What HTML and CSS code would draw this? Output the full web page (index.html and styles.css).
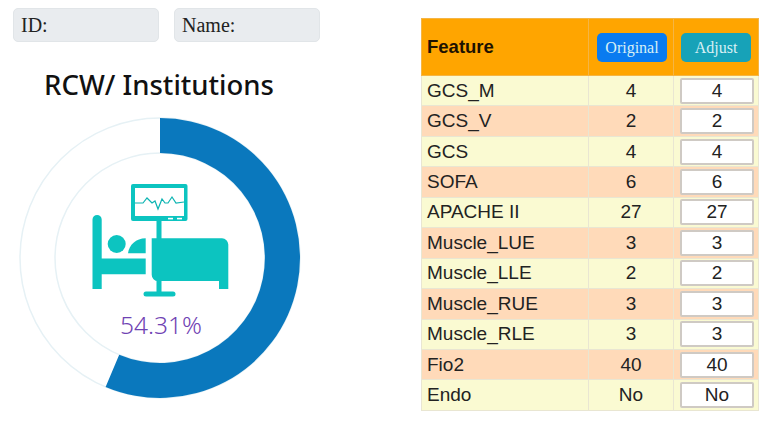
FILE: index.html
```html
<!DOCTYPE html>
<html lang="en">
<head>
  <meta charset="UTF-8" />
  <meta name="viewport" content="width=device-width, initial-scale=1.0"/>
  <title>RCW Institutions</title>
  <link rel="stylesheet" href="styles.css">
</head>
<body>
  <div class="page">
    <div class="left">
      <div class="fields">
        <div class="field">ID:</div>
        <div class="field">Name:</div>
      </div>
      <h2 class="title">RCW/ Institutions</h2>
      <svg class="gauge" width="282" height="282" viewBox="19 117 282 282">
        <circle class="track" cx="160" cy="258" r="140"/>
        <circle class="track" cx="160" cy="258" r="105"/>
        <path class="arc" d="M160 118A140 140 0 1 1 105.6 387L119.2 354.8A105 105 0 1 0 160 153Z"/>

        <!-- monitor -->
        <rect class="icon" x="131" y="184" width="56.500" height="37" rx="2"/>
        <rect class="blank" x="135" y="188" width="49" height="28"/>
        <rect class="blank" x="168" y="217.800" width="5" height="1.600"/>
        <rect class="blank" x="177" y="217.800" width="5" height="1.600"/>
        <polyline class="trace" points="135,203 143,203 147,198 152,203 155,201 158,209 162,199 165,203 168,203 172,197 176,203 184,202"/>
        <rect class="icon" x="156.500" y="220" width="5" height="74"/>
        <rect class="icon" x="143.500" y="291.500" width="32" height="5" rx="2.500"/>

        <!-- bed and patient -->
        <path class="icon" d="M92.500 219.500a4.600 4.600 0 0 1 9.200 0V258.500H145.700V274.300H101.700V289H92.500Z"/>
        <circle class="icon" cx="116.700" cy="244" r="9"/>
        <path class="icon" d="M128 253.300C129 245 136 238.300 145.700 238.300V253.300Z"/>
        <path class="icon" d="M151.700 238.300H222a6.300 6.300 0 0 1 6.300 6.300V289H219V281H158a6.300 6.300 0 0 1 -6.300 -6.300Z"/>

        <text class="percent" x="161" y="334" text-anchor="middle">54.31%</text>
      </svg>
    </div>

    <table class="features">
      <thead>
        <tr>
          <th class="name-col">Feature</th>
          <th class="orig-col"><span class="tag tag-blue">Original</span></th>
          <th><span class="tag tag-teal">Adjust</span></th>
        </tr>
      </thead>
      <tbody>
        <tr><td>GCS_M</td><td>4</td><td><input value="4"/></td></tr>
        <tr><td>GCS_V</td><td>2</td><td><input value="2"/></td></tr>
        <tr><td>GCS</td><td>4</td><td><input value="4"/></td></tr>
        <tr><td>SOFA</td><td>6</td><td><input value="6"/></td></tr>
        <tr><td>APACHE II</td><td>27</td><td><input value="27"/></td></tr>
        <tr><td>Muscle_LUE</td><td>3</td><td><input value="3"/></td></tr>
        <tr><td>Muscle_LLE</td><td>2</td><td><input value="2"/></td></tr>
        <tr><td>Muscle_RUE</td><td>3</td><td><input value="3"/></td></tr>
        <tr><td>Muscle_RLE</td><td>3</td><td><input value="3"/></td></tr>
        <tr><td>Fio2</td><td>40</td><td><input value="40"/></td></tr>
        <tr><td>Endo</td><td>No</td><td><input value="No"/></td></tr>
      </tbody>
    </table>
  </div>
</body>
</html>
```

FILE: styles.css
```css
body {
  margin: 0;
  background: white;
  color: #222;
  overflow: hidden;
}
.page {
  display: flex;
  align-items: flex-start;
  padding: 8px 12px 0 13px;
}
.left {
  width: 308px;
  margin-right: 100px;
}
.fields {
  display: flex;
  gap: 15px;
}
.field {
  width: 146px;
  height: 34px;
  box-sizing: border-box;
  padding-left: 7px;
  background-color: #e9ecef;
  border: 1px solid #e1e5e8;
  border-radius: 5px;
  font-family: "Liberation Serif", serif;
  font-size: 20px;
  line-height: 32px;
}
.title {
  margin: 24px 0 0;
  width: 292px;
  text-align: center;
  font-family: "Noto Sans", sans-serif;
  font-size: 27.5px;
  font-weight: 500;
  line-height: 38px;
  color: #111;
}
.gauge {
  display: block;
  margin: 13px 0 0 6px;
}
.track {
  fill: none;
  stroke: #e6f1f5;
  stroke-width: 1.5;
}
.arc {
  fill: #0a78bd;
}
.icon {
  fill: #0cc4c0;
}
.blank {
  fill: white;
}
.trace {
  fill: none;
  stroke: #0cb4b2;
  stroke-width: 1.2;
}
.percent {
  font-family: "Noto Sans", sans-serif;
  font-size: 24.5px;
  font-weight: 300;
  fill: #6f42b3;
}
.features {
  margin-top: 10px;
  width: 338px;
  border-collapse: collapse;
  table-layout: fixed;
  font-family: "Liberation Sans", sans-serif;
  font-size: 19px;
}
.features th {
  box-sizing: border-box;
  height: 57px;
  padding: 0;
  background-color: #ffa500;
  border: 1px solid #f5b544;
  text-align: center;
}
.features th.name-col {
  width: 167px;
  padding-left: 5px;
  text-align: left;
  font-size: 18.5px;
  color: #1e1200;
}
.features th.orig-col {
  width: 85px;
  padding-left: 2px;
}
.features td {
  box-sizing: border-box;
  height: 30.45px;
  padding: 0;
  border: 1px solid #e9e6d2;
  text-align: center;
}
.features td:first-child {
  padding-left: 5px;
  text-align: left;
}
.features tbody tr:nth-child(odd) td {
  background-color: #fafad2;
}
.features tbody tr:nth-child(even) td {
  background-color: #ffdab9;
}
.tag {
  display: inline-block;
  width: 70px;
  height: 29px;
  border-radius: 5px;
  color: #d8f0f5;
  font-family: "Liberation Serif", serif;
  font-size: 16px;
  font-weight: normal;
  line-height: 29px;
}
.tag-blue {
  background-color: #0a7bf0;
}
.tag-teal {
  background-color: #17a2b8;
}
.features input {
  display: block;
  box-sizing: border-box;
  width: 74px;
  height: 26px;
  margin: 0 0 0 6px;
  padding: 0;
  border: 2px solid #cfcac4;
  border-radius: 2px;
  background: white;
  color: #222;
  text-align: center;
  font-family: "Liberation Sans", sans-serif;
  font-size: 19px;
}
```
